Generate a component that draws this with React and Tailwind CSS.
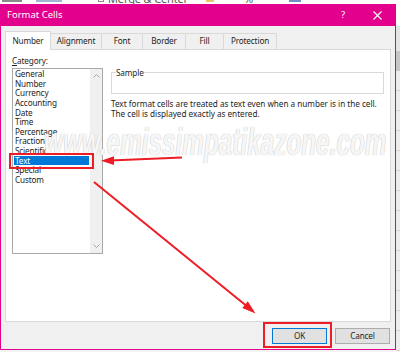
import React from 'react';

const categories = ['General', 'Number', 'Currency', 'Accounting', 'Date', 'Time', 'Percentage', 'Fraction', 'Scientific', 'Text', 'Special', 'Custom'];

const tabs = [
  { label: 'Number', width: 'w-[46px]', active: true },
  { label: 'Alignment', width: 'w-[51px]' },
  { label: 'Font', width: 'w-[41px]' },
  { label: 'Border', width: 'w-[43px]' },
  { label: 'Fill', width: 'w-[38px]' },
  { label: 'Protection', width: 'w-[53px]' },
];

function Chevron({ up }) {
  return (
    <svg width="7" height="4" viewBox="0 0 7 4">
      <polyline
        points={up ? '0.5,3.5 3.5,0.5 6.5,3.5' : '0.5,0.5 3.5,3.5 6.5,0.5'}
        fill="none"
        stroke="#a6a6a6"
        strokeWidth="1"
      />
    </svg>
  );
}

function Annotations() {
  return (
    <svg className="absolute inset-0 pointer-events-none" width="400" height="352" viewBox="0 0 400 352">
      <line x1="182" y1="157.5" x2="110" y2="160.5" stroke="#ee1c25" strokeWidth="2" />
      <polygon points="101,160.8 114,156.3 114,165" fill="#ee1c25" />
      <line x1="94" y1="182" x2="246" y2="305.5" stroke="#ee1c25" strokeWidth="2" />
      <polygon points="255.5,313.5 242.3,308 247.8,301.3" fill="#ee1c25" />
    </svg>
  );
}

export default function App() {
  return (
    <div className="relative w-[400px] h-[352px] overflow-hidden bg-[#f3f3f3] font-['Noto_Sans',sans-serif] text-[8.2px] tracking-[-0.15px] text-[#1e1e1e]">
      {/* excel ribbon behind the dialog */}
      <div className="h-[4px] bg-white overflow-hidden flex items-start text-[#555] text-[11px] leading-[11px]">
        <div className="ml-[2px] -mt-[6px] w-[20px] h-[8px] border-b-2 border-[#8a8a8a]" />
        <div className="ml-[14px] -mt-[4px] w-[26px] h-[6px] border-b-2 border-[#9fb7d4]" />
        <div className="ml-[36px] -mt-[7px] w-[6px] h-[9px] border border-[#8a8a8a]" />
        <span className="ml-[4px] -mt-[7px]">Merge &amp; Center</span>
        <div className="ml-[18px] -mt-[6px] w-[8px] h-[8px] bg-[#e8c46a]" />
        <span className="ml-[30px] -mt-[7px]">%</span>
        <div className="ml-[36px] -mt-[6px] w-[12px] h-[8px] border-b-2 border-[#6d8fc4]" />
      </div>

      <div className="flex">
        {/* dialog */}
        <div className="w-[396px] h-[346px] flex flex-col border-x border-b border-[#e3008c]">
          <div className="h-[22px] bg-[#e3008c] flex items-center text-white text-[9.5px] tracking-normal pl-[6px]">
            <span className="flex-1">Format Cells</span>
            <span className="w-[10px] text-center mr-[25px]">?</span>
            <svg className="mr-[13px]" width="9" height="9" viewBox="0 0 9 9">
              <path d="M0.5 0.5 L8.5 8.5 M8.5 0.5 L0.5 8.5" stroke="white" strokeWidth="1.1" />
            </svg>
          </div>

          <div className="flex-1 bg-[#f0f0f0] px-[4px] pt-[5px]">
            {/* tabs */}
            <div className="flex items-end h-[18px]">
              {tabs.map((tab) => (
                <div
                  key={tab.label}
                  className={
                    tab.active
                      ? `${tab.width} h-[19px] -mb-px relative z-10 bg-white border-x border-t border-[#d9d9d9] flex items-center justify-center`
                      : `${tab.width} h-[16px] bg-[#f0f0f0] border-t border-r border-[#d9d9d9] flex items-center justify-center`
                  }
                >
                  {tab.label}
                </div>
              ))}
            </div>

            {/* panel */}
            <div className="w-[386px] h-[273px] border border-[#d9d9d9] bg-white flex pl-[6px] pt-[6px]">
              <div className="flex flex-col">
                <div className="h-[10px] leading-[10px]">
                  <span className="underline">C</span>ategory:
                </div>
                <div className="mt-[2px] w-[91px] h-[186px] border border-[#a9a9a9] flex">
                  <div className="flex-1 flex flex-col">
                    {categories.map((c) =>
                      c === 'Text' ? (
                        <div key={c} className="h-[9.65px] leading-[9.65px] mx-px pl-[1px] bg-[#0078d7] text-white">
                          {c}
                        </div>
                      ) : (
                        <div key={c} className="h-[9.65px] leading-[9.65px] pl-[2px]">
                          {c}
                        </div>
                      )
                    )}
                  </div>
                  <div className="w-[12px] bg-[#f0f0f0] flex flex-col items-center justify-between pt-[5px] pb-[5px]">
                    <Chevron up />
                    <Chevron />
                  </div>
                </div>
              </div>

              <div className="ml-[8px] w-[273px]">
                <fieldset className="mt-[12px] h-[26px] border border-[#d9d9d9] px-[4px]">
                  <legend className="leading-[9px] px-0">Sample</legend>
                </fieldset>
                <p className="mt-[5px] leading-[9.7px] whitespace-nowrap tracking-[-0.03px]">
                  Text format cells are treated as text even when a number is in the cell.
                  <br />
                  The cell is displayed exactly as entered.
                </p>
              </div>
            </div>

            {/* buttons */}
            <div className="flex justify-end gap-[8px] mt-[6px] pr-[1px]">
              <button className="w-[55px] h-[16px] bg-[#e1e1e1] border border-[#0078d7] leading-none">OK</button>
              <button className="w-[55px] h-[16px] bg-[#e1e1e1] border border-[#adadad] leading-none">Cancel</button>
            </div>
          </div>
        </div>

        {/* worksheet grid at the right edge */}
        <div className="flex-1 flex flex-col bg-[#f4f4f4]">
          <div className="h-[22px] bg-[#ffffff]" />
          <div className="h-[25px] bg-[#e4e4e4]" />
          <div className="h-[20px] bg-[#c6c6c6]" />
          {Array.from({ length: 14 }).map((_, i) => (
            <div key={i} className="h-[20px] border-b border-[#d4d4d4] bg-[#ededed]" />
          ))}
        </div>
      </div>
      <div className="h-[2px] bg-[#f4f4f4]" />

      {/* watermark */}
      <div className="absolute left-[44px] top-[114px] origin-left scale-x-[0.64] whitespace-nowrap font-['Liberation_Sans',sans-serif] font-bold italic text-[38px] tracking-normal text-white/85 [text-shadow:0_0_1px_#c4c4c4,0_0_1px_#c4c4c4] pointer-events-none">
        www.emissimpatikazone.com
      </div>

      {/* red highlight boxes */}
      <div className="absolute left-[9px] top-[153px] w-[85px] h-[16px] border-2 border-[#ee1c25] pointer-events-none" />
      <div className="absolute left-[263px] top-[322px] w-[69px] h-[26px] border-2 border-[#ee1c25] pointer-events-none" />

      <Annotations />
    </div>
  );
}
